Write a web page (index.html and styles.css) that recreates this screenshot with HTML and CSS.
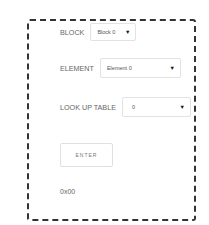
FILE: index.html
```html
<!DOCTYPE html>
<html>
<head>
  <link rel="stylesheet" href="styles.css">
</head>
<body>
  <div class="panel">
    <div class="field field-block">
      <span class="field-label">BLOCK</span>
      <div class="select select-block">
        <span>Block 0</span>
        <span class="caret">&#9660;</span>
      </div>
    </div>

    <div class="field field-element">
      <span class="field-label">ELEMENT</span>
      <div class="select select-element">
        <span>Element 0</span>
        <span class="caret">&#9660;</span>
      </div>
    </div>

    <div class="field field-lut">
      <span class="field-label">LOOK UP TABLE</span>
      <div class="select select-lut">
        <span>0</span>
        <span class="caret">&#9660;</span>
      </div>
    </div>

    <button class="btn-enter">ENTER</button>

    <div class="result">0x00</div>
  </div>
</body>
</html>
```

FILE: styles.css
```css
body {
  margin: 0;
  background: #fff;
  font-family: 'Liberation Sans', Arial, sans-serif;
}
.panel {
  box-sizing: border-box;
  width: 169px;
  height: 202px;
  margin: 19px 0 0 27px;
  padding: 2px 0 0 31px;
  border: 2px dashed #333;
  border-radius: 3px;
  display: flex;
  flex-direction: column;
  align-items: flex-start;
}
.field {
  display: flex;
  align-items: center;
  gap: 6px;
}
.field-label {
  font-size: 7.2px;
  color: #666;
}
.select {
  box-sizing: border-box;
  display: flex;
  align-items: center;
  justify-content: space-between;
  padding: 0 5px 0 6px;
  border: 1px solid #e2e2e2;
  border-radius: 2px;
  font-size: 5.5px;
  color: #555;
  background: #fff;
}
.caret {
  font-size: 5.5px;
  color: #111;
}
.select-block {
  width: 46px;
  height: 18px;
}
.field-element {
  margin-top: 17px;
}
.select-element {
  width: 81px;
  height: 20px;
}
.field-lut {
  margin-top: 19px;
}
.select-lut {
  width: 69px;
  height: 20px;
  padding-left: 9px;
}
.btn-enter {
  box-sizing: border-box;
  width: 53px;
  height: 24px;
  margin-top: 26px;
  padding: 0;
  border: 1.5px solid #e0e0e0;
  border-radius: 2px;
  background: #fff;
  font-family: inherit;
  font-size: 5px;
  letter-spacing: 1px;
  color: #777;
}
.result {
  margin-top: 21px;
  font-size: 7px;
  color: #666;
}
```
